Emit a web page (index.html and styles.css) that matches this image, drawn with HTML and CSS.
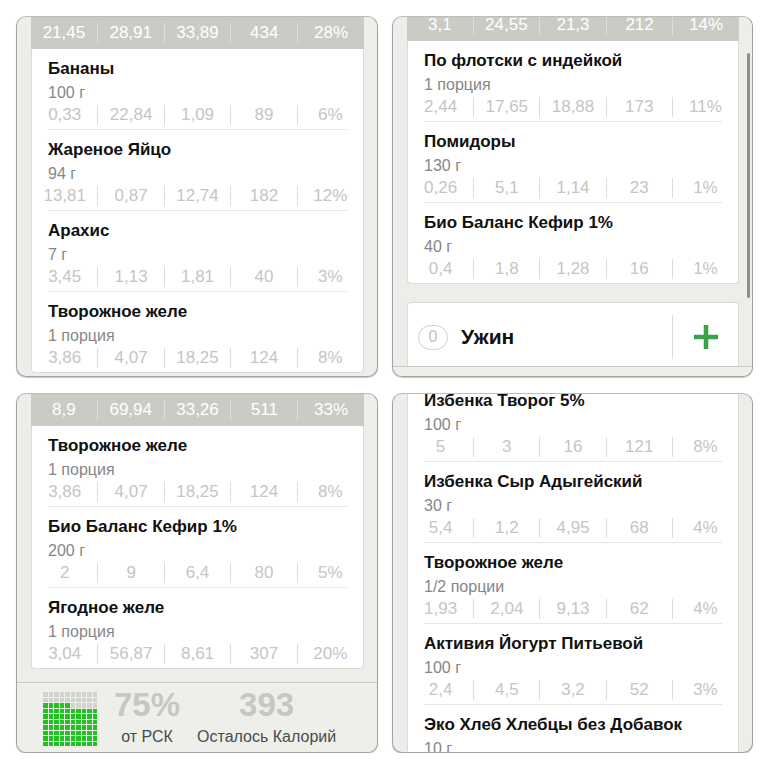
FILE: index.html
```html
<!DOCTYPE html>
<html lang="ru">
<head>
<meta charset="utf-8">
<title>Дневник питания</title>
<link rel="stylesheet" href="styles.css">
</head>
<body>
<div class="board">

  <section class="phone">
    <div class="content">
      <div class="card">
        <div class="totals"><span>21,45</span><span>28,91</span><span>33,89</span><span>434</span><span>28%</span></div>
        <div class="item"><div class="name">Бананы</div><div class="qty">100 г</div><div class="nums"><span>0,33</span><span>22,84</span><span>1,09</span><span>89</span><span>6%</span></div></div>
        <div class="item"><div class="name">Жареное Яйцо</div><div class="qty">94 г</div><div class="nums"><span>13,81</span><span>0,87</span><span>12,74</span><span>182</span><span>12%</span></div></div>
        <div class="item"><div class="name">Арахис</div><div class="qty">7 г</div><div class="nums"><span>3,45</span><span>1,13</span><span>1,81</span><span>40</span><span>3%</span></div></div>
        <div class="item"><div class="name">Творожное желе</div><div class="qty">1 порция</div><div class="nums"><span>3,86</span><span>4,07</span><span>18,25</span><span>124</span><span>8%</span></div></div>
      </div>
    </div>
  </section>

  <section class="phone">
    <div class="content scrolled-a">
      <div class="card">
        <div class="totals"><span>3,1</span><span>24,55</span><span>21,3</span><span>212</span><span>14%</span></div>
        <div class="item"><div class="name">По флотски с индейкой</div><div class="qty">1 порция</div><div class="nums"><span>2,44</span><span>17,65</span><span>18,88</span><span>173</span><span>11%</span></div></div>
        <div class="item"><div class="name">Помидоры</div><div class="qty">130 г</div><div class="nums"><span>0,26</span><span>5,1</span><span>1,14</span><span>23</span><span>1%</span></div></div>
        <div class="item"><div class="name">Био Баланс Кефир 1%</div><div class="qty">40 г</div><div class="nums"><span>0,4</span><span>1,8</span><span>1,28</span><span>16</span><span>1%</span></div></div>
      </div>
      <div class="meal">
        <div class="meal-row">
          <span class="count">0</span>
          <span class="meal-title">Ужин</span>
          <span class="add"><svg width="24" height="24" viewBox="0 0 24 24"><rect x="9.75" y="0" width="4.5" height="24" fill="#37a447"/><rect x="0" y="9.75" width="24" height="4.5" fill="#37a447"/></svg></span>
        </div>
      </div>
    </div>
    <div class="summary">
      <div class="blocks">
        <i></i><i></i><i></i><i></i><i></i><i></i><i></i><i></i><i></i><i></i>
        <i></i><i></i><i></i><i></i><i></i><i></i><i></i><i></i><i></i><i></i>
      </div>
    </div>
    <div class="scrollbar"></div>
  </section>

  <section class="phone">
    <div class="content">
      <div class="card">
        <div class="totals"><span>8,9</span><span>69,94</span><span>33,26</span><span>511</span><span>33%</span></div>
        <div class="item"><div class="name">Творожное желе</div><div class="qty">1 порция</div><div class="nums"><span>3,86</span><span>4,07</span><span>18,25</span><span>124</span><span>8%</span></div></div>
        <div class="item"><div class="name">Био Баланс Кефир 1%</div><div class="qty">200 г</div><div class="nums"><span>2</span><span>9</span><span>6,4</span><span>80</span><span>5%</span></div></div>
        <div class="item"><div class="name">Ягодное желе</div><div class="qty">1 порция</div><div class="nums"><span>3,04</span><span>56,87</span><span>8,61</span><span>307</span><span>20%</span></div></div>
      </div>
    </div>
    <div class="summary">
      <div class="blocks">
        <i></i><i></i><i></i><i></i><i></i><i></i><i></i><i></i><i></i><i></i>
        <i></i><i></i><i></i><i></i><i></i><i></i><i></i><i></i><i></i><i></i>
        <b></b><b></b><b></b><b></b><b></b><i></i><i></i><i></i><i></i><i></i>
        <b></b><b></b><b></b><b></b><b></b><b></b><b></b><b></b><b></b><b></b>
        <b></b><b></b><b></b><b></b><b></b><b></b><b></b><b></b><b></b><b></b>
        <b></b><b></b><b></b><b></b><b></b><b></b><b></b><b></b><b></b><b></b>
        <b></b><b></b><b></b><b></b><b></b><b></b><b></b><b></b><b></b><b></b>
        <b></b><b></b><b></b><b></b><b></b><b></b><b></b><b></b><b></b><b></b>
        <b></b><b></b><b></b><b></b><b></b><b></b><b></b><b></b><b></b><b></b>
        <b></b><b></b><b></b><b></b><b></b><b></b><b></b><b></b><b></b><b></b>
      </div>
      <div class="stat"><div class="big">75%</div><div class="small">от РСК</div></div>
      <div class="stat"><div class="big">393</div><div class="small">Осталось Калорий</div></div>
    </div>
  </section>

  <section class="phone">
    <div class="content scrolled-b">
      <div class="card open">
        <div class="item"><div class="name">Избенка Творог 5%</div><div class="qty">100 г</div><div class="nums"><span>5</span><span>3</span><span>16</span><span>121</span><span>8%</span></div></div>
        <div class="item"><div class="name">Избенка Сыр Адыгейский</div><div class="qty">30 г</div><div class="nums"><span>5,4</span><span>1,2</span><span>4,95</span><span>68</span><span>4%</span></div></div>
        <div class="item"><div class="name">Творожное желе</div><div class="qty">1/2 порции</div><div class="nums"><span>1,93</span><span>2,04</span><span>9,13</span><span>62</span><span>4%</span></div></div>
        <div class="item"><div class="name">Активия Йогурт Питьевой</div><div class="qty">100 г</div><div class="nums"><span>2,4</span><span>4,5</span><span>3,2</span><span>52</span><span>3%</span></div></div>
        <div class="item"><div class="name">Эко Хлеб Хлебцы без Добавок</div><div class="qty">10 г</div></div>
      </div>
    </div>
  </section>

</div>
</body>
</html>
```

FILE: styles.css
```css
* {
  box-sizing: border-box;
}

body {
  margin: 0;
  background: #ffffff;
  font-family: "Liberation Sans", Arial, Helvetica, sans-serif;
}

.board {
  display: grid;
  grid-template-columns: 362px 361px;
  grid-template-rows: 361px 360px;
  column-gap: 14px;
  row-gap: 16px;
  padding: 16px 0 0 16px;
}

.phone {
  position: relative;
  display: flex;
  flex-direction: column;
  overflow: hidden;
  background: #edeee9;
  border: 1px solid #a2a29e;
  border-top-color: #bdbdb9;
  border-radius: 10px;
  box-shadow: 0 1px 1px rgba(0, 0, 0, 0.22);
}

.content {
  flex: none;
  padding: 0 13px 0 14px;
}

.scrolled-a {
  margin-top: -8px;
}

.scrolled-b {
  margin-top: -13px;
}

.card {
  background: #ffffff;
  border: 1px solid #dcdcd7;
  border-top: none;
  border-radius: 0 0 4px 4px;
}

.card.open {
  border-bottom: none;
}

.totals {
  display: flex;
  align-items: center;
  height: 32px;
  margin: 0 -1px;
  background: #c9cbc4;
  color: #ffffff;
  font-size: 17px;
}

.totals span,
.nums span {
  flex: 1 1 0;
  text-align: center;
  line-height: 20px;
  white-space: nowrap;
}

.totals span + span {
  border-left: 1px solid #dedfda;
}

.item {
  margin: 0 16px;
  padding: 9px 0 4px;
  border-bottom: 1px solid #e6e6e4;
}

.item:last-child {
  border-bottom: none;
}

.name {
  font-size: 17px;
  font-weight: bold;
  line-height: 22px;
  color: #111111;
  white-space: nowrap;
}

.qty {
  margin-top: 2px;
  font-size: 16px;
  line-height: 22px;
  color: #868686;
}

.nums {
  display: flex;
  margin: 1px -16px 0;
  font-size: 17px;
  color: #c5c5c5;
}

.nums span + span {
  border-left: 1px solid #dcdcdc;
}

.meal {
  margin-top: 18px;
  height: 64px;
  padding: 12px 0 0 10px;
  background: #ffffff;
  border: 1px solid #dcdcd7;
  border-bottom: none;
  border-radius: 4px 4px 0 0;
}

.meal-row {
  display: flex;
  align-items: center;
  height: 44px;
}

.count {
  display: flex;
  align-items: center;
  justify-content: center;
  width: 30px;
  height: 25px;
  border: 1px solid #cfcfcf;
  border-radius: 13px;
  color: #c2c2c2;
  font-size: 16px;
}

.meal-title {
  flex: 1;
  margin-left: 13px;
  font-size: 21px;
  font-weight: bold;
  color: #111111;
}

.add {
  display: flex;
  align-items: center;
  justify-content: center;
  width: 66px;
  height: 44px;
  border-left: 1px solid #dcdcdc;
}

.summary {
  flex: none;
  display: flex;
  align-items: flex-start;
  gap: 17px;
  height: 70px;
  margin-top: auto;
  padding: 5px 0 0 26px;
  background: #eeefea;
  border-top: 1px solid #c9c9c5;
}

.blocks {
  display: grid;
  grid-template-columns: repeat(10, 4.5px);
  grid-auto-rows: 4.5px;
  gap: 1px;
  margin-top: 4px;
}

.blocks i {
  background: #d2d2d0;
}

.blocks b {
  background: #1fc21f;
}

.stat {
  text-align: center;
}

.big {
  font-size: 33px;
  font-weight: bold;
  line-height: 34px;
  color: #c6c6c4;
}

.small {
  margin-top: 5px;
  font-size: 16px;
  line-height: 20px;
  color: #4b4b4b;
}

.scrollbar {
  position: absolute;
  top: 36px;
  right: 2px;
  width: 3px;
  height: 245px;
  border-radius: 2px;
  background: #8e8e8e;
}
```
